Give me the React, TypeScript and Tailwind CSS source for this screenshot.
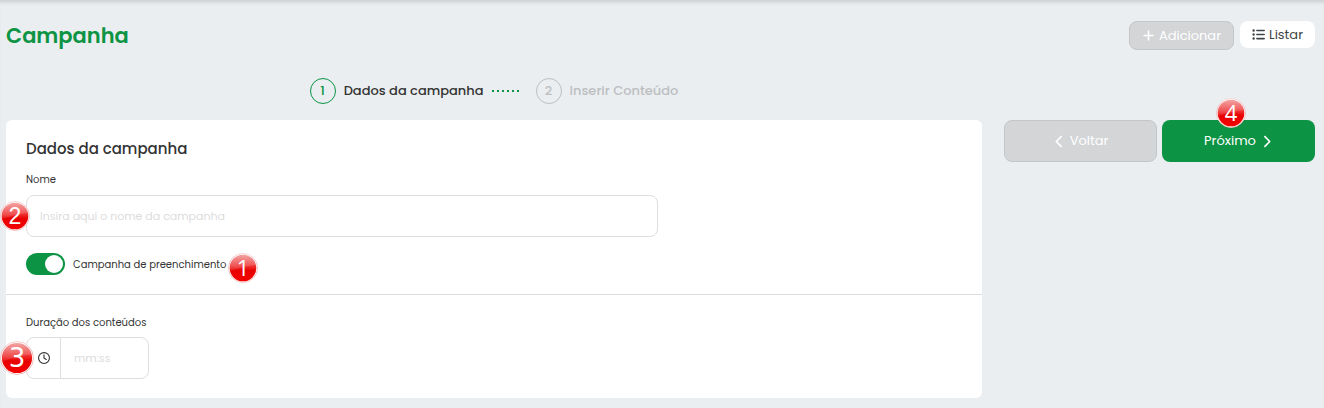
import { useId, useState } from 'react';
import { FaChevronLeft, FaChevronRight, FaListUl, FaPlus, FaRegClock } from 'react-icons/fa6';

interface BadgeProps {
  value: number;
  className: string;
  textClassName: string;
}

function Badge({ value, className, textClassName }: BadgeProps) {
  const id = useId();

  return (
    <svg viewBox="0 0 30 30" className={`absolute pointer-events-none ${className}`}>
      <defs>
        <linearGradient id={`${id}-body`} x1="0" y1="0" x2="0" y2="1">
          <stop offset="0" stopColor="#ee7676" />
          <stop offset="0.45" stopColor="#ee2c2c" />
          <stop offset="0.6" stopColor="#e80000" />
          <stop offset="1" stopColor="#f40000" />
        </linearGradient>
        <linearGradient id={`${id}-gloss`} x1="0" y1="0" x2="0" y2="1">
          <stop offset="0" stopColor="#fff" stopOpacity="0.35" />
          <stop offset="1" stopColor="#fff" stopOpacity="0.08" />
        </linearGradient>
      </defs>
      <circle cx="15" cy="15" r="14.5" fill="#fff" stroke="#f0b4b4" strokeWidth="0.8" />
      <circle cx="15" cy="15" r="13.3" fill={`url(#${id}-body)`} />
      <path d="M2 14A13 13 0 0 1 28 12Q17 13 2 18Z" fill={`url(#${id}-gloss)`} />
      <text x="15" y="23" textAnchor="middle" fill="#fff" className={textClassName}>
        {value}
      </text>
    </svg>
  );
}

export default function App() {
  const [filler, setFiller] = useState(true);
  const [name, setName] = useState('');
  const [duration, setDuration] = useState('');

  return (
    <div className="min-h-screen bg-[#eaeef1] pl-1.5 pr-[9px] pb-2.5 font-['Poppins','Inter',sans-serif] text-[#333] shadow-[inset_0_5px_4px_-3px_#c9cccf]">
      {/* Header */}
      <header className="flex items-start justify-between pt-5">
        <h1 className="text-[21px] leading-8 font-semibold text-[#0c9444]">Campanha</h1>
        <div className="flex items-start gap-1.5 pt-px text-[13px]">
          <button
            disabled
            className="flex h-[29px] items-center gap-1 rounded-lg border border-[#c4c6c8] bg-[#d3d5d7] px-3 text-white"
          >
            <FaPlus size={13} />
            Adicionar
          </button>
          <button className="flex h-[27px] items-center gap-1 rounded-lg bg-white px-3 text-[#3f4547] cursor-pointer">
            <FaListUl size={13} />
            Listar
          </button>
        </div>
      </header>

      <div className="mt-[26px] flex items-end gap-[22px]">
        {/* Steps */}
        <ol className="flex flex-1 items-center justify-center text-[13px] font-medium">
          <li className="flex items-center gap-2">
            <span className="flex size-[26px] items-center justify-center rounded-full border border-[#0c9444] text-[#0c9444]">1</span>
            Dados da campanha
          </li>
          <li aria-hidden="true" className="mx-2">
            <svg width="30" height="2" className="fill-[#0c9444]">
              {[0, 5, 10, 15, 20, 25].map((x) => (
                <rect key={x} x={x} width="2" height="2" />
              ))}
            </svg>
          </li>
          <li className="ml-1.5 flex items-center gap-2 text-[#bdbfc1]">
            <span className="flex size-[26px] items-center justify-center rounded-full border border-[#bdbfc1]">2</span>
            Inserir Conteúdo
          </li>
        </ol>
        <div className="w-[311px]" />
      </div>

      <main className="mt-4 flex items-start gap-[22px]">
        <section className="flex-1 rounded-md bg-white">
          <div className="px-5 pt-[17px] pb-[19px]">
            <h2 className="text-[15px] leading-6 font-medium">Dados da campanha</h2>
            <label htmlFor="name" className="mt-[11px] block text-[10px] leading-4">
              Nome
            </label>
            <div className="relative mt-[7px] w-[632px] max-w-full">
              <input
                id="name"
                type="text"
                value={name}
                onChange={(e) => setName(e.target.value)}
                placeholder="Insira aqui o nome da campanha"
                className="h-[42px] w-full rounded-lg border border-[#dedede] px-[13px] text-[11px] outline-none placeholder:text-[#dcdcdc]"
              />
              <Badge
                value={2}
                className="-left-[26px] top-1.5 size-[30px]"
                textClassName="text-[23px] font-['Liberation_Sans',sans-serif]"
              />
            </div>
            <div className="relative mt-4 flex w-fit items-center">
              <label className="flex items-center gap-2 text-[10px] cursor-pointer">
                <input
                  type="checkbox"
                  role="switch"
                  checked={filler}
                  onChange={(e) => setFiller(e.target.checked)}
                  className="h-[22px] w-[39px] appearance-none rounded-full bg-[#bdbfc1] p-0.5 before:block before:size-[18px] before:rounded-full before:bg-white checked:bg-[#0c9444] checked:before:translate-x-[17px] cursor-pointer"
                />
                Campanha de preenchimento
              </label>
              <Badge
                value={1}
                className="left-full top-0 ml-0.5 size-[30px]"
                textClassName="text-[22px] font-['Open_Sans',sans-serif]"
              />
            </div>
          </div>

          <div className="border-t border-[#dedede] px-5 pt-5 pb-[19px]">
            <label htmlFor="duration" className="block text-[10px] leading-4">
              Duração dos conteúdos
            </label>
            <div className="relative mt-1.5 flex h-[42px] w-[123px] rounded-lg border border-[#dedede]">
              <span className="flex w-[34px] items-center justify-center border-r border-[#dedede]">
                <FaRegClock size={12} />
              </span>
              <input
                id="duration"
                type="text"
                value={duration}
                onChange={(e) => setDuration(e.target.value)}
                placeholder="mm:ss"
                className="min-w-0 flex-1 px-[13px] text-[11px] outline-none placeholder:text-[#dcdcdc]"
              />
              <Badge
                value={3}
                className="-left-[27px] top-[3px] size-[34px]"
                textClassName="text-[23px] font-['DejaVu_Sans',sans-serif]"
              />
            </div>
          </div>
        </section>

        {/* Navigation */}
        <nav className="grid w-[311px] grid-cols-2 gap-[5px] text-[13px]">
          <button
            disabled
            className="flex h-[42px] items-center justify-center gap-1 rounded-lg border border-[#c4c6c8] bg-[#d3d5d7] text-white"
          >
            <FaChevronLeft size={13} />
            Voltar
          </button>
          <button className="relative flex h-[42px] items-center justify-center gap-1 rounded-lg bg-[#0c9444] text-white cursor-pointer">
            Próximo
            <FaChevronRight size={13} />
            <Badge
              value={4}
              className="-top-[22px] left-[54px] size-[30px]"
              textClassName="text-[22px] font-['Open_Sans',sans-serif]"
            />
          </button>
        </nav>
      </main>
    </div>
  );
}
